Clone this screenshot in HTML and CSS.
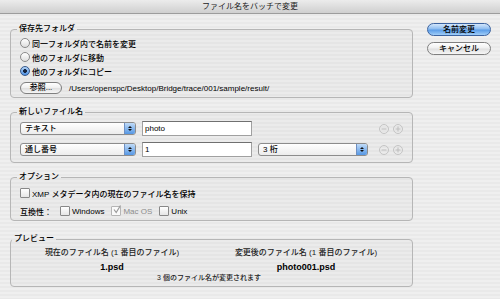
FILE: index.html
```html
<!DOCTYPE html>
<html lang="ja">
<head>
    <meta charset="UTF-8">
    <title>ファイル名をバッチで変更</title>
    <link rel="stylesheet" href="styles.css">
</head>
<body>
    <div class="titlebar">ファイル名をバッチで変更</div>

    <div class="content">
        <div class="main">
            <fieldset class="group g1">
                <legend>保存先フォルダ</legend>
                <label class="radio-row"><span class="radio"></span>同一フォルダ内で名前を変更</label>
                <label class="radio-row"><span class="radio"></span>他のフォルダに移動</label>
                <label class="radio-row"><span class="radio on"></span>他のフォルダにコピー</label>
                <div class="browse-row">
                    <span class="btn browse">参照...</span>
                    <span class="path">/Users/openspc/Desktop/Bridge/trace/001/sample/result/</span>
                </div>
            </fieldset>

            <fieldset class="group g2">
                <legend>新しいファイル名</legend>
                <div class="name-row">
                    <div class="popup wide"><span class="popup-label">テキスト</span><span class="popup-arrows"><i class="up"></i><i class="down"></i></span></div>
                    <div class="field">photo</div>
                    <div class="pm-group">
                        <svg width="10" height="10" viewBox="0 0 10 10"><circle cx="5" cy="5" r="4.5" fill="none" stroke="#c4c4c4"/><path d="M2.5 5h5" stroke="#bdbdbd" stroke-width="1"/></svg>
                        <svg width="10" height="10" viewBox="0 0 10 10"><circle cx="5" cy="5" r="4.5" fill="none" stroke="#c4c4c4"/><path d="M2.5 5h5M5 2.5v5" stroke="#bdbdbd" stroke-width="1"/></svg>
                    </div>
                </div>
                <div class="name-row">
                    <div class="popup wide"><span class="popup-label">通し番号</span><span class="popup-arrows"><i class="up"></i><i class="down"></i></span></div>
                    <div class="field">1</div>
                    <div class="popup narrow"><span class="popup-label">3 桁</span><span class="popup-arrows"><i class="up"></i><i class="down"></i></span></div>
                    <div class="pm-group">
                        <svg width="10" height="10" viewBox="0 0 10 10"><circle cx="5" cy="5" r="4.5" fill="none" stroke="#c4c4c4"/><path d="M2.5 5h5" stroke="#bdbdbd" stroke-width="1"/></svg>
                        <svg width="10" height="10" viewBox="0 0 10 10"><circle cx="5" cy="5" r="4.5" fill="none" stroke="#c4c4c4"/><path d="M2.5 5h5M5 2.5v5" stroke="#bdbdbd" stroke-width="1"/></svg>
                    </div>
                </div>
            </fieldset>

            <fieldset class="group g3">
                <legend>オプション</legend>
                <label class="check-row"><span class="check"></span>XMP メタデータ内の現在のファイル名を保持</label>
                <div class="check-row compat">
                    <span class="compat-label">互換性：</span>
                    <label class="opt"><span class="check"></span>Windows</label>
                    <label class="opt disabled"><span class="check checked"><svg width="10" height="10" viewBox="0 0 10 10"><path d="M2 4.5l2.2 3L8.5 0.5" fill="none" stroke="#9a9a9a" stroke-width="1.2"/></svg></span>Mac OS</label>
                    <label class="opt"><span class="check"></span>Unix</label>
                </div>
            </fieldset>

            <fieldset class="group g4">
                <legend>プレビュー</legend>
                <div class="preview">
                    <div class="preview-head">現在のファイル名 (1 番目のファイル)</div>
                    <div class="preview-head">変更後のファイル名 (1 番目のファイル)</div>
                    <div class="preview-file">1.psd</div>
                    <div class="preview-file">photo001.psd</div>
                    <div class="preview-note">3 個のファイル名が変更されます</div>
                </div>
            </fieldset>
        </div>

        <div class="side">
            <span class="btn default">名前変更</span>
            <span class="btn">キャンセル</span>
        </div>
    </div>
</body>
</html>
```

FILE: styles.css
```css
/* Batch rename dialog */
body {
    margin: 0;
    width: 500px;
    height: 299px;
    overflow: hidden;
    font-family: "Liberation Sans", "Noto Sans CJK JP", sans-serif;
    font-size: 8px;
    font-weight: 500;
    color: #000;
    background: repeating-linear-gradient(to bottom, #efefef 0, #efefef 2px, #e9e9e9 2px, #e9e9e9 4px);
}

.titlebar {
    height: 13px;
    line-height: 13px;
    border-bottom: 1px solid #9c9c9c;
    background: linear-gradient(#ececec, #cfcfcf);
    text-align: center;
    color: #222;
    font-weight: normal;
}

.content {
    display: flex;
    padding: 9px 0 0 10px;
}

.main {
    width: 403px;
    padding-top: 1px;
}

.side {
    margin-left: 14px;
    width: 64px;
    display: flex;
    flex-direction: column;
    gap: 6px;
}

/* group boxes */
.group {
    margin: 0;
    min-width: 0;
    border: 1px solid #b6b6b6;
    border-radius: 4px;
    padding: 2px 9px 3px 9px;
    background: rgba(0, 0, 0, 0.015);
}

.group legend {
    padding: 0 2px;
    margin-left: -3px;
    line-height: 10px;
}

.g2 {
    margin-top: 9px;
    padding-top: 4px;
    padding-bottom: 5px;
}

.g3 {
    margin-top: 9px;
    padding-top: 4px;
    padding-bottom: 2px;
}

.g4 {
    margin-top: 13px;
    padding: 3px 9px 4px 4px;
}

/* buttons */
.btn {
    display: block;
    box-sizing: border-box;
    height: 13px;
    line-height: 11px;
    border: 1px solid #7f7f7f;
    border-radius: 7px;
    background: linear-gradient(#ffffff, #f0f0f0 45%, #e0e0e0 55%, #f6f6f6);
    text-align: center;
    color: #000;
}

.btn.default {
    border-color: #3c63a0;
    background: linear-gradient(#d3e7fc, #8ebdf0 45%, #5b9de8 55%, #9fcdf8);
}

.browse {
    width: 42px;
    height: 12px;
    line-height: 10px;
}

/* radio buttons */
.radio-row {
    display: flex;
    align-items: center;
    gap: 2px;
    height: 14px;
}

.radio {
    width: 10px;
    height: 10px;
    box-sizing: border-box;
    border: 1px solid #8a8a8a;
    border-radius: 50%;
    background: linear-gradient(#ffffff, #dedede);
}

.radio.on {
    border-color: #35588c;
    background: radial-gradient(circle, #15243f 0, #15243f 1.6px, transparent 2.2px), linear-gradient(#b3d4f7, #4a8de0);
}

.browse-row {
    display: flex;
    align-items: center;
    margin-top: 4px;
}

.path {
    margin-left: 7px;
}

/* new file name rows */
.name-row {
    display: flex;
    align-items: center;
    gap: 6px;
    height: 15px;
}

.name-row + .name-row {
    margin-top: 6px;
}

.popup {
    display: flex;
    box-sizing: border-box;
    height: 13px;
    border: 1px solid #8c8c8c;
    border-radius: 3px;
    background: linear-gradient(#ffffff, #ececec);
    overflow: hidden;
}

.popup.wide {
    width: 116px;
}

.popup.narrow {
    width: 110px;
}

.popup-label {
    flex: 1;
    padding-left: 4px;
    line-height: 11px;
}

.popup-arrows {
    width: 10px;
    border-left: 1px solid #6e8fc2;
    background: linear-gradient(#c0dbf8, #5597e4);
    display: flex;
    flex-direction: column;
    align-items: center;
    justify-content: center;
    gap: 1px;
}

.popup-arrows i {
    width: 0;
    height: 0;
    border-left: 2px solid transparent;
    border-right: 2px solid transparent;
}

.popup-arrows .up {
    border-bottom: 2px solid #111;
}

.popup-arrows .down {
    border-top: 2px solid #111;
}

.field {
    box-sizing: border-box;
    width: 110px;
    height: 15px;
    line-height: 13px;
    padding-left: 2px;
    border: 1px solid #a0a0a0;
    border-top-color: #707070;
    background: #fff;
}

.pm-group {
    margin-left: auto;
    display: flex;
    gap: 4px;
}

.pm-group svg {
    display: block;
}

/* options */
.check-row {
    display: flex;
    align-items: center;
    gap: 2px;
    height: 14px;
}

.check-row + .check-row {
    margin-top: 4px;
}

.check {
    width: 10px;
    height: 10px;
    box-sizing: border-box;
    border: 1px solid #888;
    border-radius: 1px;
    background: linear-gradient(#ffffff, #e6e6e6);
}

.check.checked {
    border-color: #b5b5b5;
    background: #fafafa;
}

.check svg {
    display: block;
    margin: -2px 0 0 0;
}

.compat {
    gap: 0;
}

.compat-label {
    width: 40px;
}

.opt {
    display: flex;
    align-items: center;
    gap: 2px;
    margin-right: 7px;
}

.opt.disabled {
    color: #8c8c8c;
}

/* preview */
.preview {
    display: grid;
    grid-template-columns: 1fr 1fr;
    text-align: center;
}

.preview-head {
    line-height: 11px;
    color: #222;
}

.preview-file {
    margin-top: 4px;
    line-height: 11px;
    font-size: 9px;
    font-weight: bold;
}

.preview-note {
    grid-column: 1 / -1;
    line-height: 9px;
    font-size: 7px;
    color: #222;
}
```
